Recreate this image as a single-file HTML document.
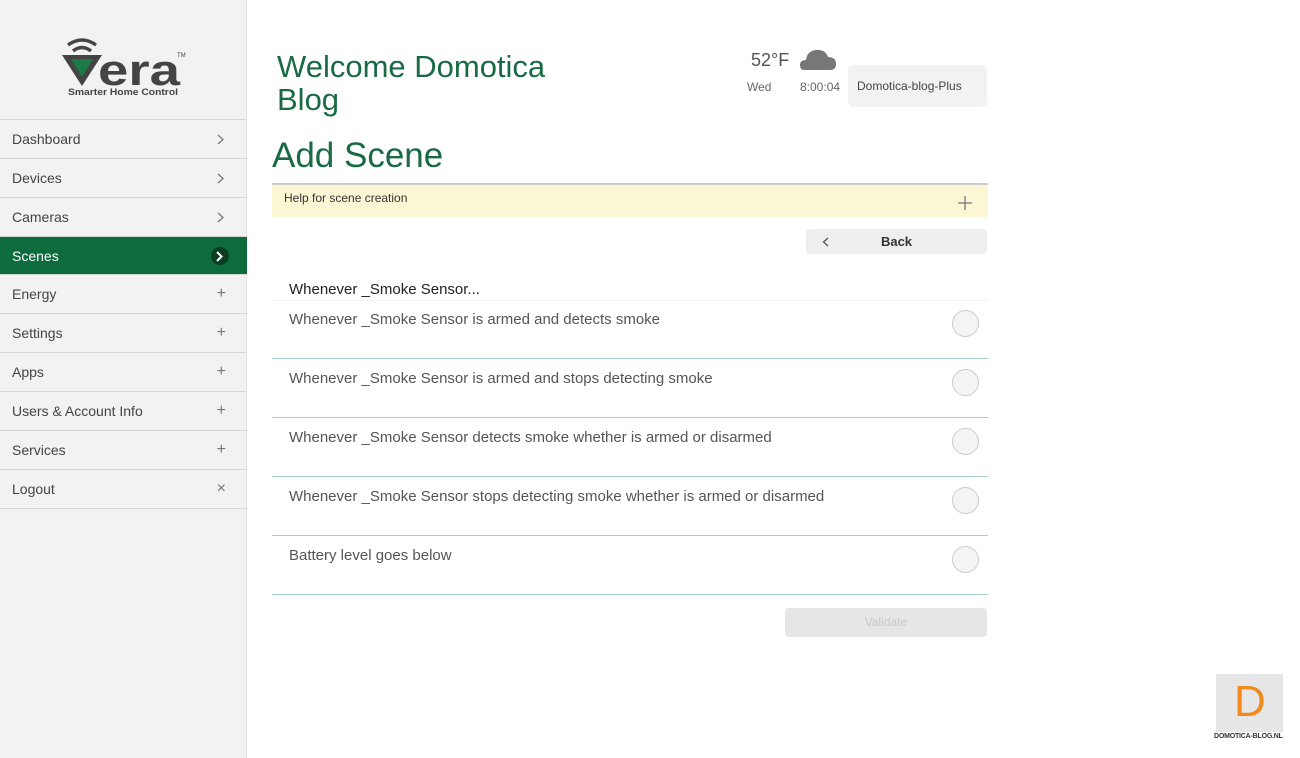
<!DOCTYPE html>
<html><head><meta charset="utf-8"><style>
*{margin:0;padding:0;box-sizing:border-box}
body{width:1300px;height:758px;background:#fff;font-family:"Liberation Sans",sans-serif;position:relative;overflow:hidden}
.sb{position:absolute;left:0;top:0;width:247px;height:758px;background:#f2f2f2;border-right:1px solid #e4e4e4}
.it{position:absolute;left:0;width:247px;height:39px;border-top:1px solid #d6d6d6;font-size:14px;color:#444;padding:11px 12px}
.it span{position:absolute;right:21px;top:10px;color:#777;font-size:16px}
.it svg{position:absolute;right:23px;top:14px}
.act{background:#0d6b3e;color:#fff}
.act b{position:absolute;right:18px;top:10px;width:18px;height:18px;border-radius:50%;background:#083d22}
.g{color:#1a6b45;position:absolute}
.ln{position:absolute;left:272px;width:716px;height:1px;background:#a6cdc6}
.row{position:absolute;left:272px;width:716px;height:58px}
.row p{position:absolute;left:17px;top:11px;font-size:15px;color:#555}
.row i{position:absolute;right:9px;top:10px;width:27px;height:27px;border-radius:50%;border:1.5px solid #ccc;background:#f4f4f4}
</style></head><body>
<div class="sb">
<svg style="position:absolute;left:60px;top:35px" width="130" height="65" viewBox="0 0 130 65">
<path d="M8 10 Q22 0 36 10" stroke="#444" stroke-width="3.5" fill="none"/>
<path d="M13 16 Q22 9 31 16" stroke="#444" stroke-width="3.5" fill="none"/>
<path d="M2 20 L42 20 L22 51 Z" fill="#444"/>
<path d="M11 24 L33 24 L22 42 Z" fill="#1b7a45"/>
<text x="38" y="50" font-family="Liberation Sans" font-size="44" font-weight="bold" fill="#444" textLength="82" lengthAdjust="spacingAndGlyphs">era</text>
<text x="117" y="22" font-size="6" fill="#444">TM</text>
<text x="8" y="60" font-size="9" font-weight="bold" fill="#444" textLength="110" lengthAdjust="spacingAndGlyphs">Smarter Home Control</text>
</svg>
<div class="it" style="top:119px">Dashboard<svg width="7" height="11"><path d="M1 1L6 5.5L1 10" stroke="#777" stroke-width="1.3" fill="none"/></svg></div>
<div class="it" style="top:158px">Devices<svg width="7" height="11"><path d="M1 1L6 5.5L1 10" stroke="#777" stroke-width="1.3" fill="none"/></svg></div>
<div class="it" style="top:197px">Cameras<svg width="7" height="11"><path d="M1 1L6 5.5L1 10" stroke="#777" stroke-width="1.3" fill="none"/></svg></div>
<div class="it act" style="top:236px">Scenes<b></b><svg style="right:24px;top:14px" width="7" height="11"><path d="M1 1L5.5 5.5L1 10" stroke="#fff" stroke-width="2" fill="none"/></svg></div>
<div class="it" style="top:274px">Energy<span>+</span></div>
<div class="it" style="top:313px">Settings<span>+</span></div>
<div class="it" style="top:352px">Apps<span>+</span></div>
<div class="it" style="top:391px">Users &amp; Account Info<span>+</span></div>
<div class="it" style="top:430px">Services<span>+</span></div>
<div class="it" style="top:469px">Logout<span>×</span></div>
<div class="it" style="top:508px;height:1px"></div>
</div>
<div class="g" style="left:277px;top:50px;font-size:31px;line-height:33px">Welcome Domotica<br>Blog</div>
<div class="g" style="left:272px;top:136px;font-size:35px">Add Scene</div>
<div style="position:absolute;left:751px;top:50px;font-size:18px;color:#555">52°F</div>
<svg style="position:absolute;left:800px;top:47px" width="37" height="24"><path d="M4 23 Q0 23 0 18 Q0 13 6 13 Q7 4 16 3 Q25 2 28 10 Q36 10 36 17 Q36 23 30 23 Z" fill="#777"/></svg>
<div style="position:absolute;left:747px;top:80px;font-size:12px;color:#666">Wed</div>
<div style="position:absolute;left:800px;top:80px;font-size:12px;color:#666">8:00:04</div>
<div style="position:absolute;left:848px;top:65px;width:139px;height:42px;background:#f2f2f2;border-radius:6px;font-size:12px;color:#444;padding:14px 9px">Domotica-blog-Plus</div>
<div style="position:absolute;left:272px;top:183px;width:716px;height:34px;background:#fbf7d4;border-top:2px solid #ccc;font-size:12px;color:#333;padding:6px 12px">Help for scene creation<svg style="position:absolute;right:16px;top:11px" width="14" height="14"><path d="M7 0V14M0 7H14" stroke="#777" stroke-width="1.3"/></svg></div>
<div style="position:absolute;left:806px;top:229px;width:181px;height:25px;background:#eee;border-radius:4px;font-size:13px;color:#333;font-weight:bold;text-align:center;line-height:25px">Back<svg style="position:absolute;left:16px;top:8px" width="7" height="10"><path d="M6 1L1.5 5L6 9" stroke="#555" stroke-width="1.3" fill="none"/></svg></div>
<div style="position:absolute;left:289px;top:281px;font-size:15px;color:#222">Whenever _Smoke Sensor...</div>
<div style="position:absolute;left:272px;top:300px;width:716px;border-top:1px solid #f4f4f4"></div>
<div class="row" style="top:300px"><p>Whenever _Smoke Sensor is armed and detects smoke</p><i></i></div>
<div class="row" style="top:359px"><p>Whenever _Smoke Sensor is armed and stops detecting smoke</p><i></i></div>
<div class="row" style="top:418px"><p>Whenever _Smoke Sensor detects smoke whether is armed or disarmed</p><i></i></div>
<div class="row" style="top:477px"><p>Whenever _Smoke Sensor stops detecting smoke whether is armed or disarmed</p><i></i></div>
<div class="row" style="top:536px"><p>Battery level goes below</p><i></i></div>
<div class="ln" style="top:358px"></div><div class="ln" style="top:417px"></div><div class="ln" style="top:476px"></div><div class="ln" style="top:535px"></div><div class="ln" style="top:594px"></div>
<div style="position:absolute;left:785px;top:608px;width:202px;height:29px;background:#e6e6e6;border-radius:4px;font-size:12px;color:#c8c8c8;text-align:center;line-height:29px">Validate</div>
<div style="position:absolute;left:1216px;top:674px;width:67px;height:58px;background:#e6e6e6"></div>
<div style="position:absolute;left:1234px;top:678px;font-size:44px;color:#f08a1c;font-weight:300;line-height:48px">D</div>
<div style="position:absolute;left:1214px;top:733px;font-size:7px;color:#333;font-weight:bold;letter-spacing:-0.2px">DOMOTICA-BLOG.NL</div>
</body></html>
